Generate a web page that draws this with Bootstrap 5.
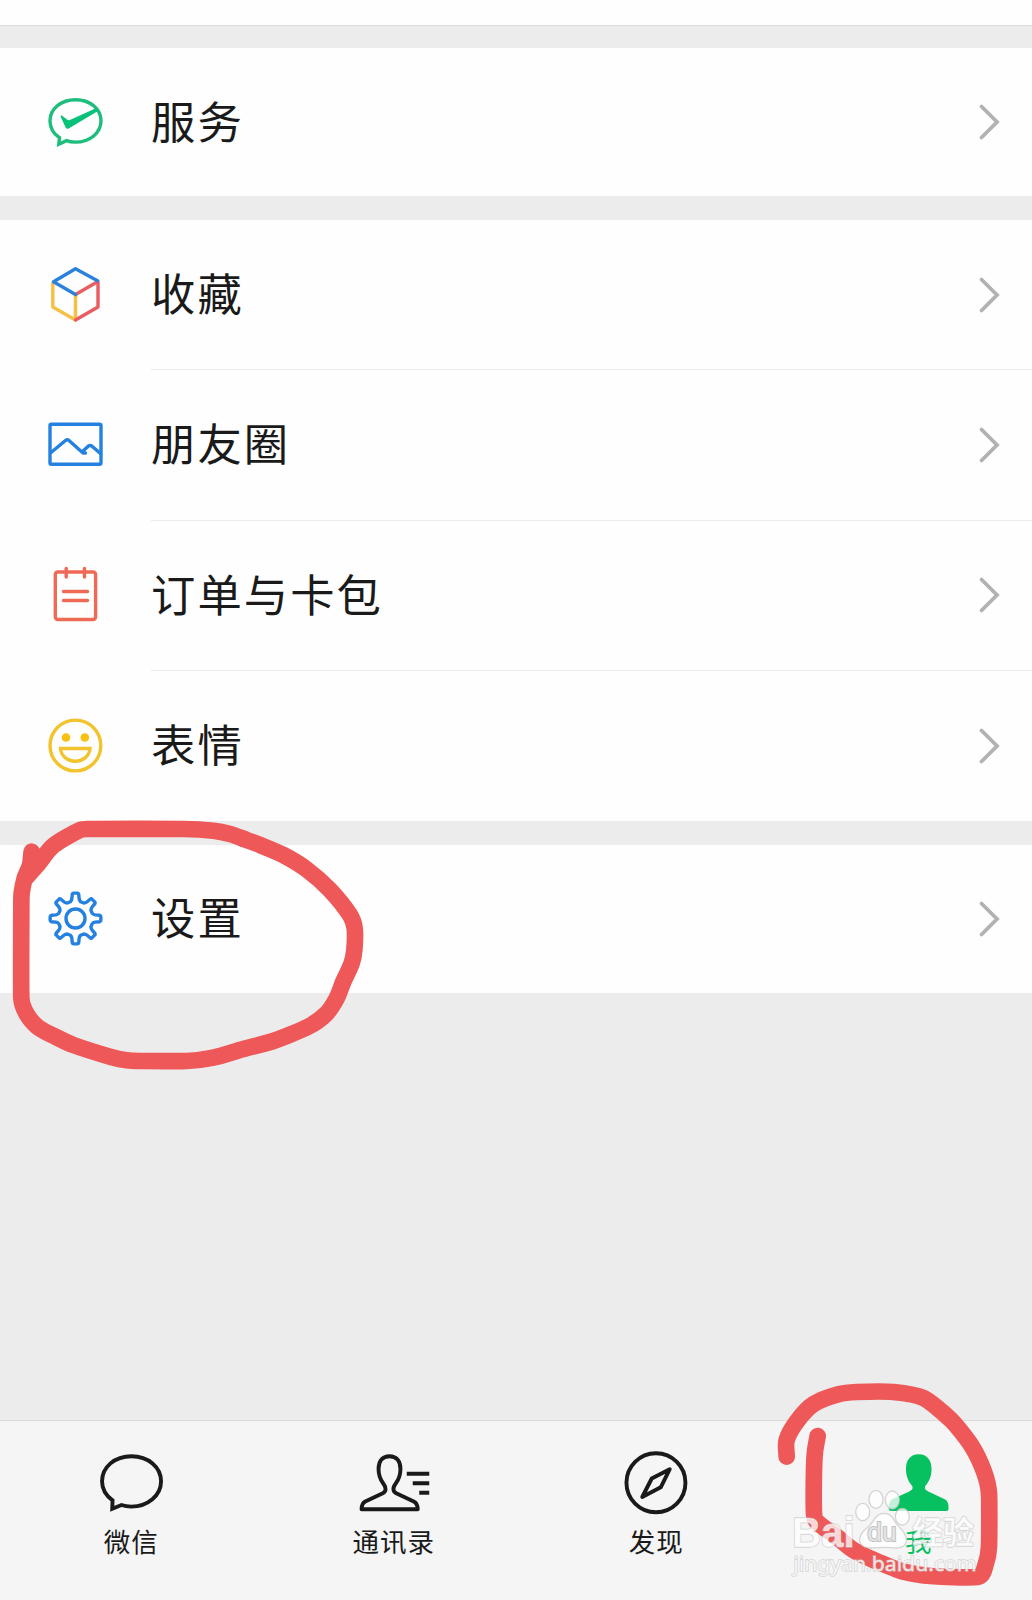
<!DOCTYPE html>
<html lang="zh-CN">
<head>
<meta charset="utf-8">
<meta name="viewport" content="width=device-width, initial-scale=1">
<title>我</title>
<link href="https://cdn.jsdelivr.net/npm/bootstrap@5.3.0/dist/css/bootstrap.min.css" rel="stylesheet">
<style>
  body { font-family: "Noto Sans CJK SC", sans-serif; background: #ececec; color: #1a1a1a; overflow: hidden; }
  .screen { height: 1600px; overflow: hidden; }
  .profile-end { height: 26px; background: #fefefe; border-bottom: 1px solid #dcdcdc; flex: none; }
  .menu-group { background: #fefefe; margin-top: 24px; }
  .profile-end + .menu-group { margin-top: 22px; }
  .menu-row { height: 148px; padding-left: 40px; color: inherit; }
  .menu-group.multi .menu-row { height: 150.5px; }
  .menu-group.multi .menu-row:first-child { height: 149px; }
  .menu-icon { width: 71px; height: 71px; margin-right: 40px; flex: none; fill: none; stroke-width: 3.4; stroke-linejoin: round; stroke-linecap: round; }
  .menu-text { font-size: 44.3px; letter-spacing: 2.1px; line-height: 60px; height: 100%; padding-bottom: 5px; }
  .row-body { height: 100%; }
  .menu-row + .menu-row .row-body { border-top: 1.5px solid #ebebeb; }
  .chevron { width: 24px; height: 40px; margin-right: 31px; fill: none; stroke: #b2b2b2; stroke-width: 3.8; stroke-linecap: round; }
  .tabs { height: 180px; background: #f5f5f5; border-top: 1.5px solid #d9d9d9; }
  .tab-item { flex: 0 0 262.5px; padding-top: 25px; }
  .tab-item svg { width: 90px; height: 70px; fill: none; stroke: #1a1a1a; stroke-width: 3.9; stroke-linejoin: round; }
  .tab-name { font-size: 26.5px; letter-spacing: 1px; line-height: 40px; margin-top: 5px; }
  .tab-item.active { color: #07c160; }
  .tab-item.active svg { fill: #07c160; stroke: none; }
  .pen { position: absolute; fill: none; stroke: #ef5858; stroke-width: 50; stroke-linecap: round; stroke-linejoin: round; pointer-events: none; }
  .pen-settings { left: 0; top: 660px; width: 400px; height: 430px; }
  .pen-me { left: 760px; top: 1370px; width: 272px; height: 230px; }
  .wm { position: absolute; left: 760px; top: 1370px; width: 272px; height: 230px; }
</style>
</head>
<body>
<div class="screen d-flex flex-column position-relative">
  <div class="profile-end"></div>

  <div class="menu-group">
    <a class="menu-row d-flex align-items-center text-decoration-none" href="#">
      <svg class="menu-icon" viewBox="40 86.500 71 71" stroke="#1dbd7c"><path d="M59.500 137.200C53 133 50 127 50 120.300C50 108.300 61 99.200 75.500 99.200S101 108.300 101 120.300S90 141.600 75.500 141.600C72 141.600 69 141.200 66.500 140.200L58.800 143.800Z" stroke-linejoin="miter"/><path d="M61.500 114.800Q60.300 115 60.800 116.500L65.500 126.800Q67 129.500 69.500 127.500L98 110.500L96.500 107.500L69.800 119.500Q68.300 120 67.300 119.300Z" fill="#07c17a" stroke="none"/></svg>
      <div class="row-body d-flex align-items-center flex-grow-1">
        <span class="menu-text d-flex align-items-center flex-grow-1">服务</span>
        <svg class="chevron" viewBox="978 102 24 40"><path d="M982.500 106.500L998 122L982.500 137.500"/></svg>
      </div>
    </a>
  </div>

  <div class="menu-group multi">
    <a class="menu-row d-flex align-items-center text-decoration-none" href="#">
      <svg class="menu-icon" viewBox="40 259 71 71"><path d="M52.800 283V307L75.500 320V295" stroke="#f5c043"/><path d="M75.500 320L98 307V281.500L75.500 294.500" stroke="#e95c62"/><path d="M75.500 294.500L53.500 281.800L75.500 268.800L97.500 280.800" stroke="#2b82dc"/></svg>
      <div class="row-body d-flex align-items-center flex-grow-1">
        <span class="menu-text d-flex align-items-center flex-grow-1">收藏</span>
        <svg class="chevron" viewBox="978 102 24 40"><path d="M982.500 106.500L998 122L982.500 137.500"/></svg>
      </div>
    </a>
    <a class="menu-row d-flex align-items-center text-decoration-none" href="#">
      <svg class="menu-icon" viewBox="40 409.500 71 71" stroke="#2581df"><rect x="50" y="424.700" width="51" height="40" rx="1.500"/><path d="M51 453L65.500 441Q67.300 439.500 69 441L83 453.500H85.500M83 451.500L88.500 446.500Q90.300 445.200 92 446.700L100.500 454"/></svg>
      <div class="row-body d-flex align-items-center flex-grow-1">
        <span class="menu-text d-flex align-items-center flex-grow-1">朋友圈</span>
        <svg class="chevron" viewBox="978 102 24 40"><path d="M982.500 106.500L998 122L982.500 137.500"/></svg>
      </div>
    </a>
    <a class="menu-row d-flex align-items-center text-decoration-none" href="#">
      <svg class="menu-icon" viewBox="40 559.500 71 71" stroke="#ee6a55"><rect x="55.300" y="572.500" width="40.300" height="47.500" rx="2.500"/><path d="M66.200 569V577.500M84.500 569V577.500M63.500 592H87.500M63.500 601H87.500"/></svg>
      <div class="row-body d-flex align-items-center flex-grow-1">
        <span class="menu-text d-flex align-items-center flex-grow-1">订单与卡包</span>
        <svg class="chevron" viewBox="978 102 24 40"><path d="M982.500 106.500L998 122L982.500 137.500"/></svg>
      </div>
    </a>
    <a class="menu-row d-flex align-items-center text-decoration-none" href="#">
      <svg class="menu-icon" viewBox="40 710.500 71 71" stroke="#f2c32c"><circle cx="75.400" cy="746" r="25.400"/><circle cx="66" cy="738" r="4.300" fill="#f8c010" stroke="none"/><circle cx="84.800" cy="738" r="4.300" fill="#f8c010" stroke="none"/><path d="M60.500 749H90C89.500 756.500 83 761.700 75.300 761.700S61 756.500 60.500 749Z" stroke-linejoin="miter"/></svg>
      <div class="row-body d-flex align-items-center flex-grow-1">
        <span class="menu-text d-flex align-items-center flex-grow-1">表情</span>
        <svg class="chevron" viewBox="978 102 24 40"><path d="M982.500 106.500L998 122L982.500 137.500"/></svg>
      </div>
    </a>
  </div>

  <div class="menu-group">
    <a class="menu-row d-flex align-items-center text-decoration-none" href="#">
      <svg class="menu-icon" viewBox="-35.500 -35.500 71 71" stroke="#2581df"><circle r="9.500"/><path id="gear" d=""/></svg>
      <div class="row-body d-flex align-items-center flex-grow-1">
        <span class="menu-text d-flex align-items-center flex-grow-1">设置</span>
        <svg class="chevron" viewBox="978 102 24 40"><path d="M982.500 106.500L998 122L982.500 137.500"/></svg>
      </div>
    </a>
  </div>

  <nav class="tabs d-flex mt-auto flex-shrink-0">
    <div class="tab-item d-flex flex-column align-items-center">
      <svg viewBox="86.250 1446 90 70"><path d="M112.800 1500.300C106 1495.500 102.300 1489 102.300 1481.300C102.300 1467 115 1456.200 131.700 1456.200S161.300 1467 161.300 1481.300S148 1506.600 131.700 1506.600C128 1506.600 124.500 1506 121.700 1505L112.500 1508.700Z" stroke-linejoin="miter"/></svg>
      <span class="tab-name">微信</span>
    </div>
    <div class="tab-item d-flex flex-column align-items-center">
      <svg viewBox="348.750 1446 90 70"><path d="M389.200 1456.200C381.500 1456.200 378.300 1462 378.300 1469C378.300 1476 380 1479.500 383 1483.500C386.500 1488 386 1491.500 382 1493.500L365 1501.500C361.500 1503.500 361.300 1506 361.300 1509.300H417.500C417.500 1506 417.300 1503.500 413.500 1501.500L396.500 1493.500C392.500 1491.500 392 1488 395.500 1483.500C398.500 1479.500 400.200 1476 400.200 1469C400.200 1462 397 1456.200 389.200 1456.200ZM406.500 1473.800H429M412.500 1483.300H429M419 1492.700H429"/></svg>
      <span class="tab-name">通讯录</span>
    </div>
    <div class="tab-item d-flex flex-column align-items-center">
      <svg viewBox="611.250 1446 90 70"><circle cx="656.200" cy="1482.700" r="29.500"/><path d="M670 1469.200L652 1478.500L642.500 1497L661 1487.300Z"/></svg>
      <span class="tab-name">发现</span>
    </div>
    <div class="tab-item active d-flex flex-column align-items-center">
      <svg viewBox="873.750 1446 90 70"><path d="M918.500 1454.300C910 1454.300 905.700 1460.500 905.700 1469C905.700 1477 908.500 1482 912 1486C913 1488.500 912 1490 909 1491.500L892.500 1499C889 1501 888.300 1505 888.500 1509Q888.700 1511 891 1511H946Q948.300 1511 948.300 1509C948.500 1505 948 1501 944 1499L928 1491.500C925 1490 924 1488.500 925 1486C928.500 1482 931.300 1477 931.300 1469C931.300 1460.500 927 1454.300 918.500 1454.300Z"/></svg>
      <span class="tab-name">我</span>
    </div>
  </nav>

  <svg class="pen pen-settings" viewBox="0 0 1200 1290"><path data-points="95,575 90,615 74,655 65,700 64,740 64,1015 80,1062 112,1100 160,1127 220,1155 330,1190 380,1201 430,1203 560,1203 640,1193 730,1167 820,1143 925,1100 978,1062 1010,1015 1030,965 1055,910 1063,870 1064,805 1050,765 990,690 920,628 850,585 780,555 740,540 690,522 640,512 550,507 270,507 240,510 160,557 110,617 76,655"/></svg>
  <svg class="pen pen-me" viewBox="0 0 816 690"><path data-points="80,260 80,210 110,155 160,103 235,73 290,66 400,66 492,85 575,152 635,228 672,305 687,370 687,530 678,580 656,620 510,618 430,605 390,590 330,565 280,540 230,500 170,455 162,430 162,300 165,245 173,198"/></svg>

  <svg class="wm" viewBox="0 0 816 690" fill="#fff" fill-opacity=".76" stroke="#c4c4c4" stroke-opacity=".7" stroke-width="4">
    <ellipse cx="308" cy="426" rx="21" ry="26"/><ellipse cx="348" cy="388" rx="21" ry="27"/><ellipse cx="397" cy="390" rx="21" ry="27"/><ellipse cx="427" cy="440" rx="21" ry="25"/><path d="M373 430C346 430 343 455 325 470C305 485 294 500 301 518C312 542 345 532 372 532S428 542 438 518C444 500 432 485 417 470C400 455 399 430 373 430Z"/>
    <g paint-order="stroke">
      <text x="96" y="530" font-size="126" font-weight="700" font-family="Liberation Sans, sans-serif" textLength="188" lengthAdjust="spacingAndGlyphs">Bai</text>
      <text x="322" y="514" font-size="76" font-family="Liberation Sans, sans-serif" textLength="88" lengthAdjust="spacingAndGlyphs" fill="#eee" stroke="#aaa" stroke-width="6">du</text>
      <text x="456" y="521" font-size="94" font-weight="700" font-family="Noto Sans CJK SC, sans-serif" textLength="186">经验</text>
      <text x="100" y="602" font-size="59" font-family="Noto Sans, sans-serif" textLength="550" lengthAdjust="spacingAndGlyphs">jingyan.baidu.com</text>
    </g>
  </svg>
</div>
<script src="https://cdn.jsdelivr.net/npm/bootstrap@5.3.0/dist/js/bootstrap.bundle.min.js"></script>
<script>
  // Eight-tooth gear: flat-tipped teeth joined by shallow rounded valleys.
  const at = (r, a) => {
    const t = (a - 90) * Math.PI / 180;
    return (r * Math.cos(t)).toFixed(2) + ' ' + (r * Math.sin(t)).toFixed(2);
  };
  let gear = 'M' + at(17.5, -17);
  for (let i = 0; i < 8; i++) {
    const c = i * 45;
    gear += 'Q' + at(18.5, c - 12) + ' ' + at(20, c - 10.5) + 'L' + at(24.5, c - 7.5) +
            'Q' + at(25.6, c - 6.5) + ' ' + at(25.4, c - 4) + 'L' + at(25.4, c + 4) +
            'Q' + at(25.6, c + 6.5) + ' ' + at(24.5, c + 7.5) + 'L' + at(20, c + 10.5) +
            'Q' + at(18.5, c + 12) + ' ' + at(17.5, c + 17) + 'L' + at(17.5, c + 28);
  }
  document.getElementById('gear').setAttribute('d', gear + 'Z');

  // Pen marks: a Catmull-Rom curve through the sampled points, tension limited by segment length.
  document.querySelectorAll('[data-points]').forEach(path => {
    const p = path.dataset.points.split(' ').map(s => s.split(',').map(Number));
    const dist = (a, b) => Math.hypot(a[0] - b[0], a[1] - b[1]);
    const tangent = i => {
      const a = p[Math.max(i - 1, 0)], b = p[Math.min(i + 1, p.length - 1)], l = dist(a, b) || 1;
      return [(b[0] - a[0]) / l, (b[1] - a[1]) / l];
    };
    let d = 'M' + p[0];
    for (let i = 0; i < p.length - 1; i++) {
      const a = p[i], b = p[i + 1], k = Math.min(dist(a, b) / 3, 22), s = tangent(i), e = tangent(i + 1);
      d += 'C' + [a[0] + s[0] * k, a[1] + s[1] * k, b[0] - e[0] * k, b[1] - e[1] * k, b[0], b[1]].map(n => n.toFixed(1)).join(' ');
    }
    path.setAttribute('d', d);
  });
</script>
</body>
</html>
